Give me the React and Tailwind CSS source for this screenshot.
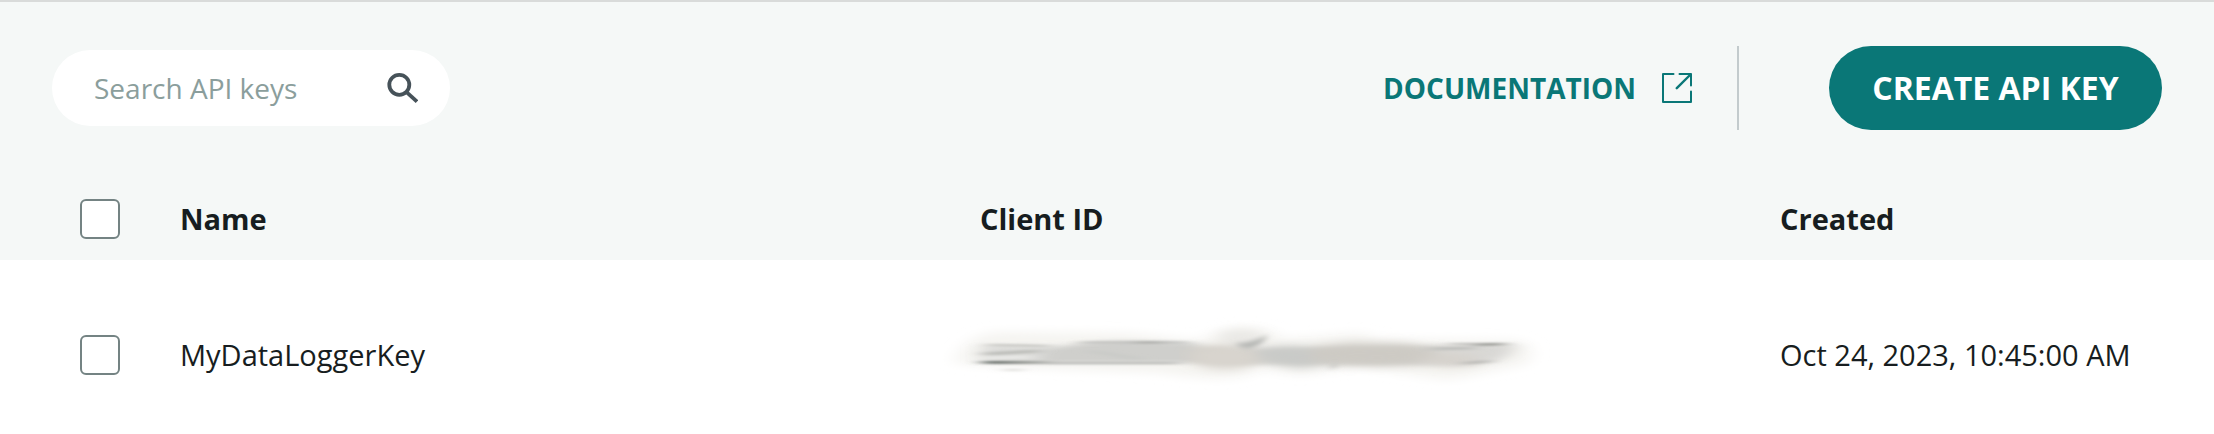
const keys = [{ name: 'MyDataLoggerKey', created: 'Oct 24, 2023, 10:45:00 AM' }];

function SearchIcon() {
  return (
    <svg viewBox="0 0 32 32" className="size-8 shrink-0" fill="none" stroke="#465259" aria-hidden="true">
      <circle cx="13.3" cy="12.8" r="10" strokeWidth="3.8" />
      <path d="M20 19.6 L31 29.6" strokeWidth="3.8" />
    </svg>
  );
}

function ExternalIcon() {
  return (
    <svg viewBox="0 0 30 30" className="size-[30px] shrink-0" fill="none" stroke="currentColor" strokeWidth="2" strokeLinejoin="round" strokeLinecap="round" aria-hidden="true">
      <path d="M11.5 1 H1 V29 H29 V18.5" />
      <path d="M17.5 1 H29 V12.5" />
      <path d="M28.5 1.5 L14.8 15.2" strokeWidth="2.4" />
    </svg>
  );
}

function Smudge() {
  return (
    <svg viewBox="0 2 620 80" className="-ml-10 h-20 w-[620px] max-w-none" role="img" aria-label="Hidden client ID">
      <defs>
        <filter id="halo" filterUnits="userSpaceOnUse" x="-20" y="-20" width="660" height="120"><feGaussianBlur stdDeviation="9 5" /></filter>
        <filter id="body" filterUnits="userSpaceOnUse" x="-20" y="-20" width="660" height="120"><feGaussianBlur stdDeviation="9 2" /></filter>
        <filter id="cloud" filterUnits="userSpaceOnUse" x="-20" y="-20" width="660" height="120"><feGaussianBlur stdDeviation="8 4" /></filter>
        <filter id="line" filterUnits="userSpaceOnUse" x="-20" y="-20" width="660" height="120"><feGaussianBlur stdDeviation="8 1.3" /></filter>
        <filter id="tip" filterUnits="userSpaceOnUse" x="-20" y="-20" width="660" height="120"><feGaussianBlur stdDeviation="3 2" /></filter>
        <linearGradient id="dark" gradientUnits="userSpaceOnUse" x1="42" x2="110" y1="0" y2="0">
          <stop offset="0" stopColor="#555d58" />
          <stop offset="1" stopColor="#b4b5b1" />
        </linearGradient>
      </defs>
      <g filter="url(#halo)">
        <path d="M14 50 C20 34 34 20 60 19 L190 20 L260 28 C280 14 300 12 325 16 L345 26 L420 20 L440 26 L570 27 C592 28 596 40 585 52 C550 56 520 68 500 66 L420 54 L360 62 L320 56 C300 70 260 66 220 60 L60 54 Z" fill="#f5f4f1" />
      </g>
      <g filter="url(#body)">
        <path d="M42 32 L120 33 L120 50 L42 50 Z" fill="#dcdcd9" />
        <path d="M105 38 C130 30 160 28 190 28 L260 30 L260 50 L100 50 Z" fill="#cfcfcc" />
        <path d="M250 34 L300 34 L330 42 L320 52 L250 50 Z" fill="#d2cfc9" />
        <path d="M315 36 L490 33 L490 51 L315 51 Z" fill="#d2d1cd" />
        <path d="M485 32 L574 31 C574 42 560 50 532 52 L480 52 Z" fill="#d9d8d5" />
      </g>
      <g filter="url(#cloud)">
        <ellipse cx="285" cy="44" rx="34" ry="12" fill="#d8d4ce" />
        <ellipse cx="301" cy="24" rx="22" ry="7" fill="#e9e8e5" />
        <path d="M310 37 L345 33 L400 36 L395 50 L360 55 L330 50 Z" fill="#c9cac8" />
        <path d="M372 34 L410 30 L465 31 L500 38 L500 50 L440 53 L405 52 L370 48 Z" fill="#cdcac4" />
        <ellipse cx="510" cy="47" rx="30" ry="6" fill="#d6d2cc" />
      </g>
      <g filter="url(#line)" fill="none">
        <path d="M43 49.3 H110" stroke="url(#dark)" strokeWidth="2.8" />
        <path d="M105 50 H238" stroke="#b9bab7" strokeWidth="2" />
        <path d="M44 41 L100 38" stroke="#bbbcb8" strokeWidth="3" />
        <path d="M44 45 L90 44" stroke="#eeeeec" strokeWidth="2" />
        <path d="M48 32 L108 33" stroke="#c4c4c0" strokeWidth="2" />
        <path d="M140 29.5 H246" stroke="#bdbebb" strokeWidth="2" />
        <path d="M195 29.5 H222" stroke="#a6a7a3" strokeWidth="2" />
        <path d="M150 38 L200 46" stroke="#c9cac7" strokeWidth="3" />
        <path d="M490 36 L535 35" stroke="#bfc0bd" strokeWidth="3" />
        <path d="M510 31 H558" stroke="#b5b5b1" strokeWidth="1.6" />
        <path d="M536 32 L564 31" stroke="#8b8c87" strokeWidth="2" />
        <path d="M524 50.5 L550 48" stroke="#aeaeab" strokeWidth="2" />
        <path d="M66 57 H80" stroke="#d4d3cf" strokeWidth="2" />
      </g>
      <path d="M294 31 Q314 29 328 22 Q324 31 311 35 Q302 36 294 31 Z" fill="#b4b5b2" filter="url(#tip)" />
      <path d="M386 56 L395 51 L399 53 Z" fill="#b9b9b5" filter="url(#tip)" />
    </svg>
  );
}

function Tick({ label }) {
  return (
    <input
      type="checkbox"
      aria-label={label}
      className="block size-10 appearance-none rounded-md border-2 border-[#748383] bg-white checked:bg-[#0a7777]"
    />
  );
}

export default function App() {
  return (
    <main className="min-h-screen bg-white font-['Open_Sans',sans-serif] text-[28px] leading-10 text-[#171d20]">
      <header className="flex items-center justify-between border-t-2 border-[#d9dbda] bg-[#f5f8f7] px-[52px] pt-11 pb-12">
        <label className="flex h-[76px] w-[398px] items-center rounded-full bg-white pr-8 pl-[42px]">
          <input
            type="search"
            aria-label="Search API keys"
            placeholder="Search API keys"
            className="min-w-0 flex-1 bg-transparent outline-none placeholder:text-[#8b9e9c]"
          />
          <SearchIcon />
        </label>
        <div className="flex h-[84px] items-center">
          <a href="#documentation" className="flex items-center gap-[26px] pr-[45px] font-bold text-[#0a7777]">
            DOCUMENTATION
            <ExternalIcon />
          </a>
          <div className="h-full w-[2px] bg-[#c3cbcd]" />
          <button type="button" className="ml-[90px] h-full w-[333px] rounded-full bg-[#0a7777] text-[32px] font-bold text-white">
            CREATE API KEY
          </button>
        </div>
      </header>
      <table className="w-full table-fixed text-left text-[29px]">
        <colgroup>
          <col className="w-[180px]" />
          <col />
          <col />
          <col className="w-[434px]" />
        </colgroup>
        <thead className="bg-[#f5f8f7]">
          <tr className="h-[82px]">
            <th className="pl-20"><Tick label="Select all keys" /></th>
            <th className="font-bold">Name</th>
            <th className="font-bold">Client ID</th>
            <th className="font-bold">Created</th>
          </tr>
        </thead>
        <tbody>
          {keys.map((key) => (
            <tr key={key.name}>
              <td className="pt-[55px] pb-9 pl-20"><Tick label={`Select ${key.name}`} /></td>
              <td className="pt-[55px] pb-9">{key.name}</td>
              <td className="pt-[55px] pb-9"><Smudge /></td>
              <td className="pt-[55px] pb-9 whitespace-nowrap">{key.created}</td>
            </tr>
          ))}
        </tbody>
      </table>
    </main>
  );
}
